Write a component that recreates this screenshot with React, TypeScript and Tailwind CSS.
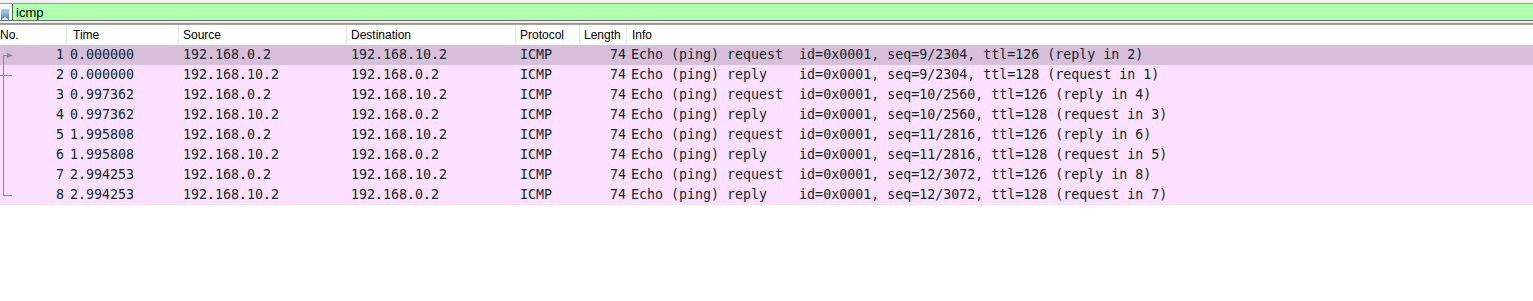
import React from "react";

type Row = {
  no: number;
  time: string;
  src: string;
  dst: string;
  len: number;
  info: string;
};

const rows: Row[] = [
  { no: 1, time: "0.000000", src: "192.168.0.2", dst: "192.168.10.2", len: 74, info: "Echo (ping) request  id=0x0001, seq=9/2304, ttl=126 (reply in 2)" },
  { no: 2, time: "0.000000", src: "192.168.10.2", dst: "192.168.0.2", len: 74, info: "Echo (ping) reply    id=0x0001, seq=9/2304, ttl=128 (request in 1)" },
  { no: 3, time: "0.997362", src: "192.168.0.2", dst: "192.168.10.2", len: 74, info: "Echo (ping) request  id=0x0001, seq=10/2560, ttl=126 (reply in 4)" },
  { no: 4, time: "0.997362", src: "192.168.10.2", dst: "192.168.0.2", len: 74, info: "Echo (ping) reply    id=0x0001, seq=10/2560, ttl=128 (request in 3)" },
  { no: 5, time: "1.995808", src: "192.168.0.2", dst: "192.168.10.2", len: 74, info: "Echo (ping) request  id=0x0001, seq=11/2816, ttl=126 (reply in 6)" },
  { no: 6, time: "1.995808", src: "192.168.10.2", dst: "192.168.0.2", len: 74, info: "Echo (ping) reply    id=0x0001, seq=11/2816, ttl=128 (request in 5)" },
  { no: 7, time: "2.994253", src: "192.168.0.2", dst: "192.168.10.2", len: 74, info: "Echo (ping) request  id=0x0001, seq=12/3072, ttl=126 (reply in 8)" },
  { no: 8, time: "2.994253", src: "192.168.10.2", dst: "192.168.0.2", len: 74, info: "Echo (ping) reply    id=0x0001, seq=12/3072, ttl=128 (request in 7)" },
];

function TreeMark({ index, total }: { index: number; total: number }) {
  const first = index === 0;
  const last = index === total - 1;
  return (
    <svg width="14" height="20" className="absolute left-0 top-0" shapeRendering="crispEdges">
      {first && (
        <>
          <line x1="3.5" y1="10" x2="3.5" y2="20" stroke="#8a8a8a" />
          <line x1="3" y1="10.5" x2="8" y2="10.5" stroke="#8a8a8a" />
          <polygon points="7,8 13,10.5 7,13" fill="#8a8a8a" shapeRendering="auto" />
        </>
      )}
      {!first && !last && <line x1="3.5" y1="0" x2="3.5" y2="20" stroke="#8a8a8a" />}
      {index === 1 && <line x1="0" y1="10.5" x2="12" y2="10.5" stroke="#8a8a8a" />}
      {last && (
        <>
          <line x1="3.5" y1="0" x2="3.5" y2="11" stroke="#8a8a8a" />
          <line x1="3" y1="10.5" x2="12" y2="10.5" stroke="#8a8a8a" />
        </>
      )}
    </svg>
  );
}

function HeaderCell({ w, children, pl = "pl-[4px]" }: { w: string; children: React.ReactNode; pl?: string }) {
  return (
    <div className={`${w} ${pl} h-full flex items-center border-r border-[#e5e5e5] shrink-0 overflow-hidden whitespace-nowrap`}>
      {children}
    </div>
  );
}

export default function App() {
  return (
    <div className="w-[1533px] h-[301px] bg-white overflow-hidden">
      {/* filter toolbar */}
      <div className="h-[3px] bg-[#f0f0f0]" />
      <div className="h-[18px] flex border-t border-[#a0a0a0] border-b border-b-[#6b6b6b]">
        <div className="w-[13px] bg-[#f6f6f6] border-r border-[#5a5a5a] shrink-0 relative">
          <svg width="12" height="16" className="absolute left-0 top-0">
            <defs>
              <linearGradient id="bm" x1="0" y1="0" x2="0" y2="1">
                <stop offset="0" stopColor="#b9d3ee" />
                <stop offset="1" stopColor="#3f78bd" />
              </linearGradient>
            </defs>
            <path d="M1 6 H9 V16 L5 13 L1 16 Z" fill="url(#bm)" />
            <path d="M1 6 H9" stroke="#7fa6d4" strokeWidth="1" />
          </svg>
        </div>
        <div className="flex-1 bg-[#afffaf] flex items-center pl-[3px] text-[13px] text-black font-['Liberation_Sans',sans-serif] leading-none">
          icmp
        </div>
      </div>
      <div className="h-[2px] bg-[#f0f0f0]" />
      <div className="h-[2px] bg-gradient-to-b from-[#8c8c8c] to-[#a8a8a8]" />

      {/* column header */}
      <div className="h-[20px] flex text-[12px] text-black font-['Liberation_Sans',sans-serif]">
        <HeaderCell w="w-[67px]" pl="pl-0">No.</HeaderCell>
        <HeaderCell w="w-[112px]" pl="pl-[6px]">Time</HeaderCell>
        <HeaderCell w="w-[168px]">Source</HeaderCell>
        <HeaderCell w="w-[169px]">Destination</HeaderCell>
        <HeaderCell w="w-[64px]">Protocol</HeaderCell>
        <HeaderCell w="w-[47px]">Length</HeaderCell>
        <div className="flex-1 pl-[5px] h-full flex items-center whitespace-nowrap">Info</div>
      </div>

      {/* packet list */}
      <div className="font-['DejaVu_Sans_Mono',monospace] text-[13.3px] text-[#12272e]">
        {rows.map((r, i) => (
          <div
            key={r.no}
            className={`h-[20px] flex items-center whitespace-pre ${i === 0 ? "bg-[#d7bed9]" : "bg-[#fce0ff]"}`}
          >
            <div className="w-[67px] shrink-0 relative h-full flex items-center justify-end pr-[3px]">
              <TreeMark index={i} total={rows.length} />
              {r.no}
            </div>
            <div className="w-[112px] shrink-0 pl-[3px]">{r.time}</div>
            <div className="w-[168px] shrink-0 pl-[4px]">{r.src}</div>
            <div className="w-[169px] shrink-0 pl-[4px]">{r.dst}</div>
            <div className="w-[64px] shrink-0 pl-[4px]">ICMP</div>
            <div className="w-[47px] shrink-0 text-right pr-[1px]">{r.len}</div>
            <div className="flex-1 pl-[4px]">{r.info}</div>
          </div>
        ))}
      </div>
    </div>
  );
}
